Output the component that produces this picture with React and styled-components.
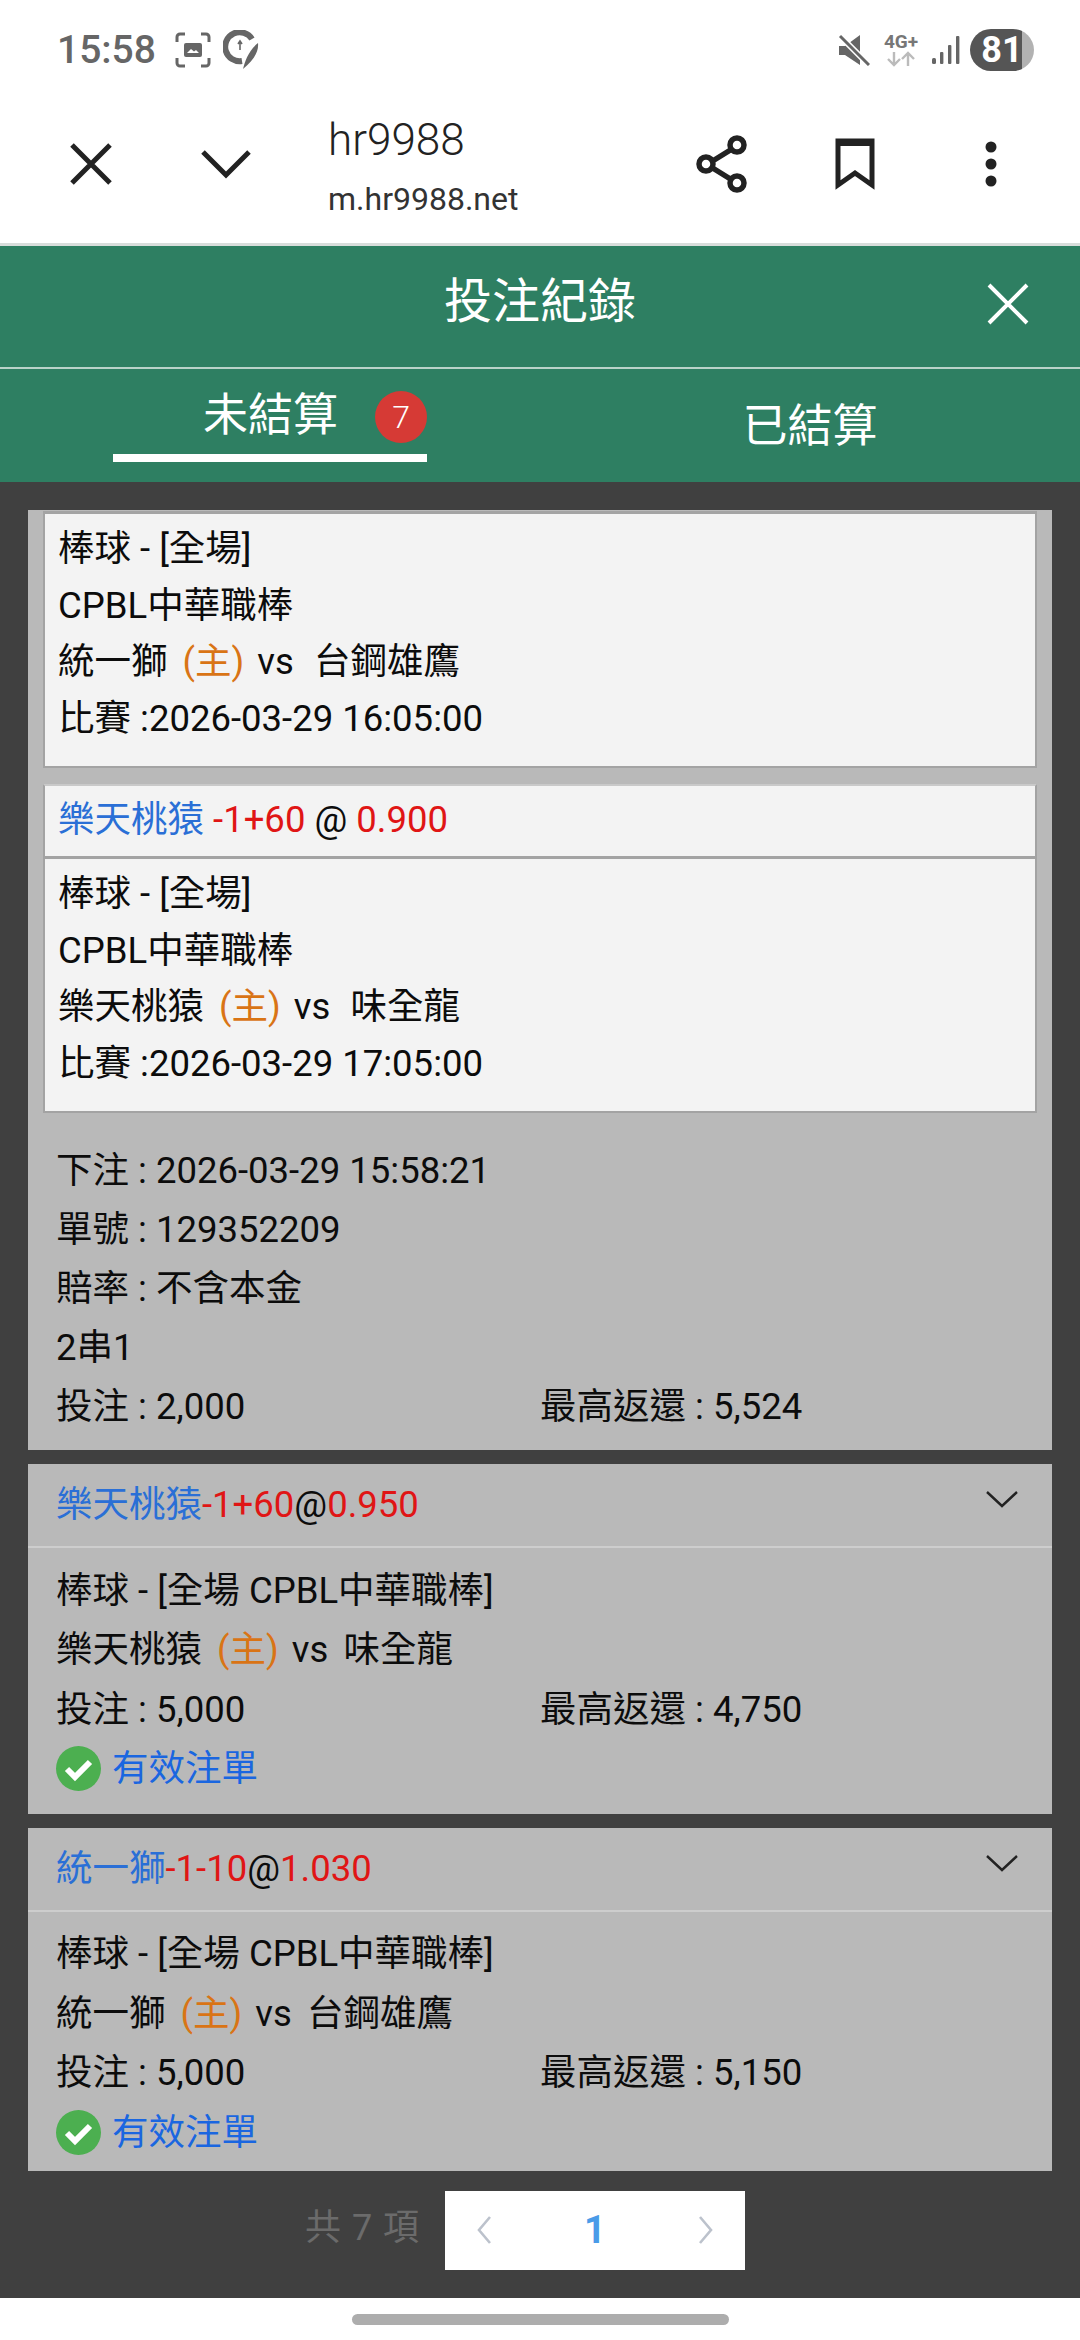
import React from 'react'
import styled, { createGlobalStyle } from 'styled-components'

const GlobalStyle = createGlobalStyle`
  html, body {
    margin: 0;
    padding: 0;
    background: #fff;
  }
  body {
    font-family: Roboto, "Noto Sans CJK TC", sans-serif;
    color: #0c0c0c;
  }
`

const Page = styled.div`
  width: 1080px;
  height: 2340px;
  display: flex;
  flex-direction: column;
  overflow: hidden;
`

const StatusBar = styled.div`
  flex-shrink: 0;
  height: 84px;
  box-sizing: border-box;
  padding: 16px 46px 0 57px;
  display: flex;
  align-items: center;
  justify-content: space-between;
  color: #666;
`
const StatusGroup = styled.div`
  display: flex;
  align-items: center;
  gap: ${p => p.$gap || 12}px;
`
const Clock = styled.span`
  font-size: 39px;
  font-weight: 500;
  margin-right: 7px;
`
const NetBlock = styled.div`
  display: flex;
  flex-direction: column;
  align-items: center;
  width: 36px;
`
const NetLabel = styled.span`
  font-size: 19px;
  line-height: 18px;
  font-weight: 700;
  color: #777;
`
const Battery = styled.div`
  width: 64px;
  height: 42px;
  margin-left: -3px;
  border-radius: 21px;
  background: linear-gradient(90deg, #555 0 52px, #b2b2b2 52px);
  color: #fff;
  font-size: 36px;
  font-weight: 700;
  display: flex;
  align-items: center;
  justify-content: center;
`

const BrowserBar = styled.div`
  flex-shrink: 0;
  height: 159px;
  box-sizing: border-box;
  display: flex;
  align-items: center;
  padding: 0 83px 0 68px;
  color: #222;
`
const IconSlot = styled.div`
  display: flex;
  align-items: center;
  justify-content: center;
  width: ${p => p.$w || 46}px;
  margin-right: ${p => p.$mr || 0}px;
`
const UrlBlock = styled.div`
  flex: 1;
  display: flex;
  flex-direction: column;
  margin-left: 77px;
  padding-top: 7px;
`
const SiteName = styled.div`
  font-size: 44px;
  line-height: 52px;
  font-weight: 300;
  color: #222;
`
const SiteUrl = styled.div`
  font-size: 32px;
  line-height: 44px;
  margin-top: 11px;
  color: #333;
`

const Sheet = styled.div`
  flex: 1;
  display: flex;
  flex-direction: column;
  background: #404040;
  border-top: 3px solid #d8dddb;
`
const TitleBar = styled.div`
  flex-shrink: 0;
  height: 121px;
  background: #2e7f62;
  color: #fff;
  position: relative;
  display: flex;
  align-items: center;
  justify-content: center;
  font-size: 48px;
  line-height: 60px;
  border-bottom: 2px solid #b9d3c9;
`
const TitleText = styled.span`
  margin-bottom: 9px;
`
const CloseButton = styled.div`
  position: absolute;
  right: 49px;
  top: 35px;
  width: 46px;
  height: 46px;
  display: flex;
`
const TabBar = styled.div`
  flex-shrink: 0;
  height: 113px;
  background: #2e7f62;
  display: flex;
  color: #fff;
`
const Tab = styled.div`
  position: relative;
  width: ${p => p.$w}px;
  margin-left: ${p => p.$ml}px;
  height: ${p => 85 - p.$pt}px;
  padding-top: ${p => p.$pt}px;
  font-size: 45px;
  line-height: 60px;
  border-bottom: ${p => (p.$active ? '8px solid #fff' : 'none')};
  text-align: ${p => (p.$active ? 'left' : 'center')};
  text-indent: ${p => (p.$active ? '90px' : '0')};
`
const CountBadge = styled.span`
  position: absolute;
  top: 22px;
  right: 0;
  width: 52px;
  height: 52px;
  border-radius: 50%;
  background: #d63a35;
  font-size: 32px;
  line-height: 52px;
  text-align: center;
  text-indent: 0;
  font-weight: 300;
`

const List = styled.div`
  flex: 1;
  display: flex;
  flex-direction: column;
  gap: 14px;
  padding: 28px 28px 0;
`
const Card = styled.div`
  background: #b9b9b9;
`
const ParlayCard = styled(Card)`
  padding-top: 1px;
`
const LegBox = styled.div`
  margin: 0 15px;
  padding: 7px 0 19px 13px;
  background: #f3f3f3;
  border: 2px solid #a3a3a3;
  border-top-width: 3px;
  font-size: 36.5px;
  line-height: 56.5px;
`
const LegHeader = styled.div`
  margin: 16px 15px 0;
  height: 72px;
  box-sizing: border-box;
  padding-left: 13px;
  background: #f3f3f3;
  border: 2px solid #a3a3a3;
  border-top-color: #c9c9c9;
  border-bottom-width: 0;
  font-size: 36.5px;
  line-height: 68px;
`
const Line = styled.div`
  white-space: pre;
`
const Team = styled.span`
  color: #2a6fd6;
`
const Odds = styled.span`
  color: #e01515;
`
const Home = styled.span`
  color: #d97415;
  margin: 0 4px 0 6px;
`
const Away = styled.span`
  margin-left: ${p => p.$gap}px;
`
const Details = styled.div`
  padding: 28px 28px 14px;
  font-size: 36.5px;
  line-height: 59px;
`
const SplitRow = styled.div`
  display: grid;
  grid-template-columns: 484px 1fr;
`
const CardHeader = styled.div`
  position: relative;
  height: 84px;
  box-sizing: border-box;
  padding-left: 28px;
  border-bottom: 2px solid #cdcdcd;
  font-size: 36.5px;
  line-height: 82px;
`
const Chevron = styled.svg`
  position: absolute;
  right: 34px;
  top: 26px;
`
const CardBody = styled.div`
  padding: ${p => p.$pad};
  font-size: 36.5px;
  line-height: 59.5px;
`
const ValidRow = styled.div`
  display: flex;
  align-items: center;
  gap: 11px;
  color: #1a66e0;
`
const Pager = styled.div`
  height: 113px;
  box-sizing: border-box;
  padding-top: 6px;
  display: flex;
  align-items: flex-start;
  margin-left: -28px;
`
const PagerTotal = styled.div`
  width: 140px;
  margin-left: 305px;
  height: 79px;
  font-size: 36px;
  line-height: 74px;
  color: #6b6b6b;
  letter-spacing: 1px;
`
const PagerBox = styled.div`
  width: 300px;
  height: 79px;
  background: #fff;
  display: flex;
  align-items: center;
  justify-content: space-between;
  padding: 0 31px;
  box-sizing: border-box;
`
const PagerNumber = styled.span`
  color: #4a9be8;
  font-size: 38px;
  font-weight: 700;
`

const NavBar = styled.div`
  flex-shrink: 0;
  height: 26px;
  background: #fff;
  display: flex;
  justify-content: center;
  padding-top: 16px;
`
const GestureBar = styled.div`
  width: 377px;
  height: 11px;
  border-radius: 6px;
  background: #adadad;
`

const ScreenshotIcon = () => (
  <svg width="36" height="36" viewBox="0 0 36 36" fill="none">
    <path d="M2 10V5a3 3 0 0 1 3-3h5M26 2h5a3 3 0 0 1 3 3v5M34 26v5a3 3 0 0 1-3 3h-5M10 34H5a3 3 0 0 1-3-3v-5" stroke="#666" strokeWidth="3" />
    <rect x="9" y="11" width="18" height="14" rx="2" fill="#666" />
    <path d="M12 21l4-4 3 2.5 2-1.5 3 3z" fill="#fff" />
  </svg>
)

const QuillIcon = () => (
  <svg width="36" height="40" viewBox="0 0 36 40" fill="none">
    <path d="M29 9A14.5 14.5 0 1 0 19 31" stroke="#666" strokeWidth="6" />
    <path d="M35 13c1 9-5 18-15 26 2-7 5-18 15-26z" fill="#666" />
    <path d="M17 11v9M15 14l2-3 2 3" stroke="#666" strokeWidth="1.6" />
  </svg>
)

const MuteIcon = () => (
  <svg width="32" height="32" viewBox="0 0 32 32">
    <path d="M1 12h6L22 1v30L7 21H1z" fill="#666" />
    <path d="M2 2l29 29" stroke="#fff" strokeWidth="6" />
    <path d="M2 2l29 29" stroke="#666" strokeWidth="3" />
  </svg>
)

const NetArrows = () => (
  <svg width="30" height="16" viewBox="0 0 30 16" fill="none" stroke="#bbb" strokeWidth="2.4">
    <path d="M8 1v13M2 8l6 6 6-6M22 15V2M16 8l6-6 6 6" />
  </svg>
)

const SignalIcon = () => (
  <svg width="28" height="30" viewBox="0 0 28 30" fill="#666">
    <rect x="0" y="23" width="4" height="6" rx="1.5" />
    <rect x="8" y="17" width="3.4" height="12" rx="1" />
    <rect x="16" y="10" width="3.4" height="19" rx="1" />
    <rect x="24" y="1" width="3.4" height="28" rx="1" />
  </svg>
)

const CrossIcon = ({ size = 46, color = '#222', width = 5 }) => (
  <svg width={size} height={size} viewBox="0 0 46 46" fill="none" stroke={color} strokeWidth={width}>
    <path d="M4 4l38 38M42 4L4 42" />
  </svg>
)

const ChevronIcon = () => (
  <svg width="50" height="30" viewBox="0 0 50 30" fill="none" stroke="#222" strokeWidth="5">
    <path d="M2 3l23 23L48 3" />
  </svg>
)

const ShareIcon = () => (
  <svg width="52" height="58" viewBox="0 0 52 58" fill="none" stroke="#222" strokeWidth="5.5">
    <path d="M36 14L15 27M15 32l21 13" />
    <circle cx="41" cy="10" r="7" />
    <circle cx="10" cy="29" r="7" />
    <circle cx="41" cy="48" r="7" />
  </svg>
)

const BookmarkIcon = () => (
  <svg width="40" height="52" viewBox="0 0 40 52">
    <path d="M3 3h34v44L20 35 3 47z" fill="none" stroke="#222" strokeWidth="5" />
    <rect x="1" y="1" width="38" height="7" fill="#222" />
  </svg>
)

const MoreIcon = () => (
  <svg width="12" height="46" viewBox="0 0 12 46" fill="#222">
    <circle cx="6" cy="6" r="5.5" />
    <circle cx="6" cy="23" r="5.5" />
    <circle cx="6" cy="40" r="5.5" />
  </svg>
)

const CheckBadge = () => (
  <svg width="45" height="45" viewBox="0 0 45 45">
    <circle cx="22.5" cy="22.5" r="22.5" fill="#4caf50" />
    <path d="M11 23l8 8 15-15" fill="none" stroke="#fff" strokeWidth="6" />
  </svg>
)

const PagerArrow = ({ dir }) => (
  <svg width="16" height="30" viewBox="0 0 16 30" fill="none" stroke="#bcc2cc" strokeWidth="2.6">
    <path d={dir === 'left' ? 'M14 2L3 15l11 13' : 'M2 2l11 13L2 28'} />
  </svg>
)

const Leg = ({ team, away, time }) => (
  <LegBox>
    <Line>棒球 - [全場]</Line>
    <Line>CPBL中華職棒</Line>
    <Line>{team} <Home>(主)</Home> vs  <Away $gap={2}>{away}</Away></Line>
    <Line>比賽 :{time}</Line>
  </LegBox>
)

const SettledCard = ({ team, line, odds, away, stake, payout, pad }) => (
  <Card>
    <CardHeader>
      <Team>{team}</Team><Odds>{line}</Odds>@<Odds>{odds}</Odds>
      <Chevron width="32" height="18" viewBox="0 0 32 18" fill="none" stroke="#222" strokeWidth="2.4">
        <path d="M1 2l15 14L31 2" />
      </Chevron>
    </CardHeader>
    <CardBody $pad={pad}>
      <Line>棒球 - [全場 CPBL中華職棒]</Line>
      <Line>{team} <Home>(主)</Home> vs  <Away $gap={-3}>{away}</Away></Line>
      <SplitRow>
        <span>投注 : {stake}</span>
        <span>最高返還 : {payout}</span>
      </SplitRow>
      <ValidRow>
        <CheckBadge />
        <span>有效注單</span>
      </ValidRow>
    </CardBody>
  </Card>
)

const App = () => (
  <Page>
    <GlobalStyle />
    <StatusBar>
      <StatusGroup>
        <Clock>15:58</Clock>
        <ScreenshotIcon />
        <QuillIcon />
      </StatusGroup>
      <StatusGroup $gap={13}>
        <MuteIcon />
        <NetBlock>
          <NetLabel>4G+</NetLabel>
          <NetArrows />
        </NetBlock>
        <SignalIcon />
        <Battery>81</Battery>
      </StatusGroup>
    </StatusBar>

    <BrowserBar>
      <IconSlot $mr={87}><CrossIcon /></IconSlot>
      <IconSlot $w={50}><ChevronIcon /></IconSlot>
      <UrlBlock>
        <SiteName>hr9988</SiteName>
        <SiteUrl>m.hr9988.net</SiteUrl>
      </UrlBlock>
      <IconSlot $w={52} $mr={87}><ShareIcon /></IconSlot>
      <IconSlot $w={40} $mr={110}><BookmarkIcon /></IconSlot>
      <IconSlot $w={12}><MoreIcon /></IconSlot>
    </BrowserBar>

    <Sheet>
      <TitleBar>
        <TitleText>投注紀錄</TitleText>
        <CloseButton><CrossIcon color="#fff" width={4} /></CloseButton>
      </TitleBar>
      <TabBar>
        <Tab $active $w={314} $ml={113} $pt={17}>
          未結算
          <CountBadge>7</CountBadge>
        </Tab>
        <Tab $w={220} $ml={273} $pt={28}>已結算</Tab>
      </TabBar>

      <List>
        <ParlayCard>
          <Leg team="統一獅" away="台鋼雄鷹" time="2026-03-29 16:05:00" />
          <LegHeader>
            <Team>樂天桃猿</Team> <Odds>-1+60</Odds> @ <Odds>0.900</Odds>
          </LegHeader>
          <Leg team="樂天桃猿" away="味全龍" time="2026-03-29 17:05:00" />
          <Details>
            <Line>下注 : 2026-03-29 15:58:21</Line>
            <Line>單號 : 129352209</Line>
            <Line>賠率 : 不含本金</Line>
            <Line>2串1</Line>
            <SplitRow>
              <span>投注 : 2,000</span>
              <span>最高返還 : 5,524</span>
            </SplitRow>
          </Details>
        </ParlayCard>

        <SettledCard team="樂天桃猿" line="-1+60" odds="0.950" away="味全龍" stake="5,000" payout="4,750" pad="12.5px 28px 15px" />
        <SettledCard team="統一獅" line="-1-10" odds="1.030" away="台鋼雄鷹" stake="5,000" payout="5,150" pad="12.5px 28px 8.5px" />

        <Pager>
          <PagerTotal>共 7 項</PagerTotal>
          <PagerBox>
            <PagerArrow dir="left" />
            <PagerNumber>1</PagerNumber>
            <PagerArrow dir="right" />
          </PagerBox>
        </Pager>
      </List>
    </Sheet>

    <NavBar><GestureBar /></NavBar>
  </Page>
)

export default App
